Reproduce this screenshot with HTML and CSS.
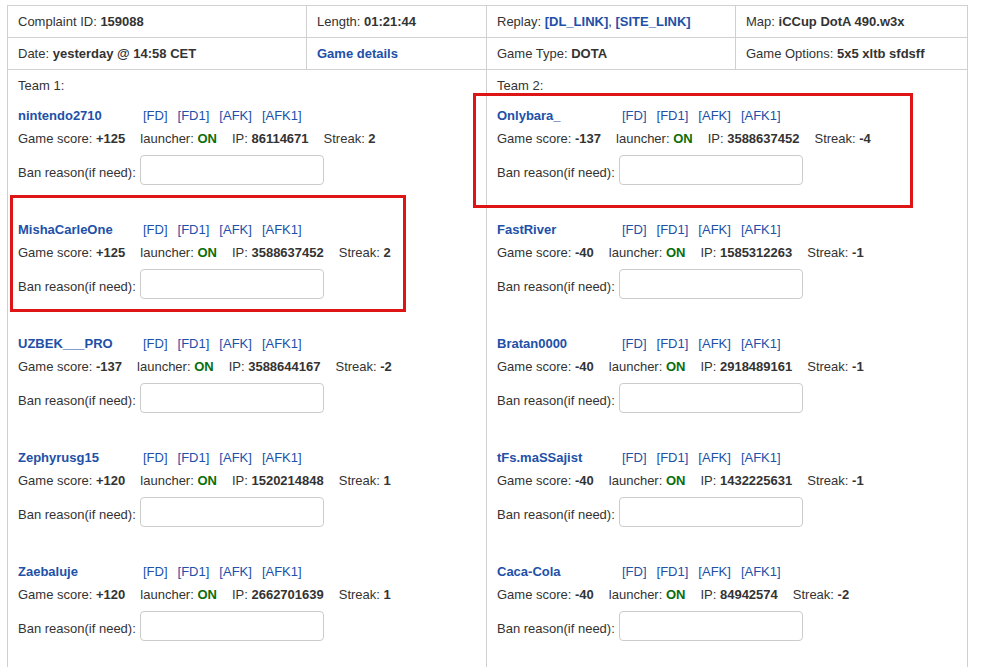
FILE: index.html
```html
<!DOCTYPE html>
<html lang="en">
<head>
    <meta charset="UTF-8">
    <title>Complaint 159088</title>
    <link rel="stylesheet" href="styles.css">
</head>
<body>
    <div class="page">
        <table class="complaint">
            <colgroup>
                <col class="c1">
                <col class="c2">
                <col class="c3">
                <col class="c4">
            </colgroup>
            <tr class="info-row">
                <td>Complaint ID: <b>159088</b></td>
                <td>Length: <b>01:21:44</b></td>
                <td>Replay: <a href="#">[DL_LINK]</a>, <a href="#">[SITE_LINK]</a></td>
                <td>Map: <b>iCCup DotA 490.w3x</b></td>
            </tr>
            <tr class="info-row">
                <td>Date: <b>yesterday @ 14:58 CET</b></td>
                <td><a href="#">Game details</a></td>
                <td>Game Type: <b>DOTA</b></td>
                <td>Game Options: <b>5x5 xltb sfdsff</b></td>
            </tr>
            <tr>
                <td colspan="2" class="team">
                    <div class="team-title">Team 1:</div>

                    <div class="player">
                        <div class="p-head"><a href="#" class="p-name">nintendo2710</a><a href="#">[FD]</a><a href="#">[FD1]</a><a href="#">[AFK]</a><a href="#">[AFK1]</a></div>
                        <div class="p-stats"><span>Game score: <b>+125</b></span><span>launcher: <b class="on">ON</b></span><span>IP: <b>86114671</b></span><span>Streak: <b>2</b></span></div>
                        <div class="p-ban"><span>Ban reason(if need):</span><input type="text"></div>
                    </div>

                    <div class="player">
                        <div class="mark mark-left"></div>
                        <div class="p-head"><a href="#" class="p-name">MishaCarleOne</a><a href="#">[FD]</a><a href="#">[FD1]</a><a href="#">[AFK]</a><a href="#">[AFK1]</a></div>
                        <div class="p-stats"><span>Game score: <b>+125</b></span><span>launcher: <b class="on">ON</b></span><span>IP: <b>3588637452</b></span><span>Streak: <b>2</b></span></div>
                        <div class="p-ban"><span>Ban reason(if need):</span><input type="text"></div>
                    </div>

                    <div class="player">
                        <div class="p-head"><a href="#" class="p-name">UZBEK___PRO</a><a href="#">[FD]</a><a href="#">[FD1]</a><a href="#">[AFK]</a><a href="#">[AFK1]</a></div>
                        <div class="p-stats"><span>Game score: <b>-137</b></span><span>launcher: <b class="on">ON</b></span><span>IP: <b>3588644167</b></span><span>Streak: <b>-2</b></span></div>
                        <div class="p-ban"><span>Ban reason(if need):</span><input type="text"></div>
                    </div>

                    <div class="player">
                        <div class="p-head"><a href="#" class="p-name">Zephyrusg15</a><a href="#">[FD]</a><a href="#">[FD1]</a><a href="#">[AFK]</a><a href="#">[AFK1]</a></div>
                        <div class="p-stats"><span>Game score: <b>+120</b></span><span>launcher: <b class="on">ON</b></span><span>IP: <b>1520214848</b></span><span>Streak: <b>1</b></span></div>
                        <div class="p-ban"><span>Ban reason(if need):</span><input type="text"></div>
                    </div>

                    <div class="player">
                        <div class="p-head"><a href="#" class="p-name">Zaebaluje</a><a href="#">[FD]</a><a href="#">[FD1]</a><a href="#">[AFK]</a><a href="#">[AFK1]</a></div>
                        <div class="p-stats"><span>Game score: <b>+120</b></span><span>launcher: <b class="on">ON</b></span><span>IP: <b>2662701639</b></span><span>Streak: <b>1</b></span></div>
                        <div class="p-ban"><span>Ban reason(if need):</span><input type="text"></div>
                    </div>
                </td>
                <td colspan="2" class="team">
                    <div class="team-title">Team 2:</div>

                    <div class="player">
                        <div class="mark mark-right"></div>
                        <div class="p-head"><a href="#" class="p-name">Onlybara_</a><a href="#">[FD]</a><a href="#">[FD1]</a><a href="#">[AFK]</a><a href="#">[AFK1]</a></div>
                        <div class="p-stats"><span>Game score: <b>-137</b></span><span>launcher: <b class="on">ON</b></span><span>IP: <b>3588637452</b></span><span>Streak: <b>-4</b></span></div>
                        <div class="p-ban"><span>Ban reason(if need):</span><input type="text"></div>
                    </div>

                    <div class="player">
                        <div class="p-head"><a href="#" class="p-name">FastRiver</a><a href="#">[FD]</a><a href="#">[FD1]</a><a href="#">[AFK]</a><a href="#">[AFK1]</a></div>
                        <div class="p-stats"><span>Game score: <b>-40</b></span><span>launcher: <b class="on">ON</b></span><span>IP: <b>1585312263</b></span><span>Streak: <b>-1</b></span></div>
                        <div class="p-ban"><span>Ban reason(if need):</span><input type="text"></div>
                    </div>

                    <div class="player">
                        <div class="p-head"><a href="#" class="p-name">Bratan0000</a><a href="#">[FD]</a><a href="#">[FD1]</a><a href="#">[AFK]</a><a href="#">[AFK1]</a></div>
                        <div class="p-stats"><span>Game score: <b>-40</b></span><span>launcher: <b class="on">ON</b></span><span>IP: <b>2918489161</b></span><span>Streak: <b>-1</b></span></div>
                        <div class="p-ban"><span>Ban reason(if need):</span><input type="text"></div>
                    </div>

                    <div class="player">
                        <div class="p-head"><a href="#" class="p-name">tFs.maSSajist</a><a href="#">[FD]</a><a href="#">[FD1]</a><a href="#">[AFK]</a><a href="#">[AFK1]</a></div>
                        <div class="p-stats"><span>Game score: <b>-40</b></span><span>launcher: <b class="on">ON</b></span><span>IP: <b>1432225631</b></span><span>Streak: <b>-1</b></span></div>
                        <div class="p-ban"><span>Ban reason(if need):</span><input type="text"></div>
                    </div>

                    <div class="player">
                        <div class="p-head"><a href="#" class="p-name">Caca-Cola</a><a href="#">[FD]</a><a href="#">[FD1]</a><a href="#">[AFK]</a><a href="#">[AFK1]</a></div>
                        <div class="p-stats"><span>Game score: <b>-40</b></span><span>launcher: <b class="on">ON</b></span><span>IP: <b>84942574</b></span><span>Streak: <b>-2</b></span></div>
                        <div class="p-ban"><span>Ban reason(if need):</span><input type="text"></div>
                    </div>
                </td>
            </tr>
        </table>
    </div>
</body>
</html>
```

FILE: styles.css
```css
body {
    margin: 0;
    font-family: 'Liberation Sans', Arial, sans-serif;
    font-size: 13px;
    color: #333;
    background: #fff;
}

.page {
    padding: 5px 7px;
}

.complaint {
    border-collapse: collapse;
    table-layout: fixed;
    width: 960px;
}

.complaint col.c1 { width: 299px; }
.complaint col.c2 { width: 180px; }
.complaint col.c3 { width: 249px; }
.complaint col.c4 { width: 232px; }

.complaint td {
    border: 1px solid #d0d0d0;
    padding: 0 10px;
    vertical-align: top;
    line-height: 18px;
}

.info-row td {
    height: 31px;
    vertical-align: middle;
}

.complaint b {
    font-weight: bold;
}

a {
    color: #2150a8;
    text-decoration: none;
}

.info-row a {
    font-weight: bold;
}

.complaint td.team {
    padding-top: 7px;
    padding-bottom: 12px;
}

.team-title {
    line-height: 18px;
}

.player {
    position: relative;
    padding: 9px 0 23px;
}

.p-head,
.p-stats {
    line-height: 23px;
    white-space: nowrap;
}

.p-head a {
    margin-right: 10px;
}

.p-head a.p-name {
    display: inline-block;
    width: 125px;
    margin-right: 0;
    font-weight: bold;
}

.p-stats span {
    margin-right: 15px;
}

.on {
    color: #0a6e0a;
}

.p-ban {
    margin-top: 5px;
    display: flex;
    align-items: center;
    gap: 4px;
}

.p-ban span {
    padding-top: 5px;
}

.p-ban input {
    width: 184px;
    height: 30px;
    box-sizing: border-box;
    border: 1px solid #ccc;
    border-radius: 4px;
    margin: 0 0 1px;
}

/* annotation frames */
.mark {
    position: absolute;
    border: 3px solid #dd1515;
    pointer-events: none;
}

.mark-left {
    top: -14px;
    left: -8px;
    width: 390px;
    height: 111px;
}

.mark-right {
    top: -2px;
    left: -24px;
    width: 434px;
    height: 109px;
}
```
